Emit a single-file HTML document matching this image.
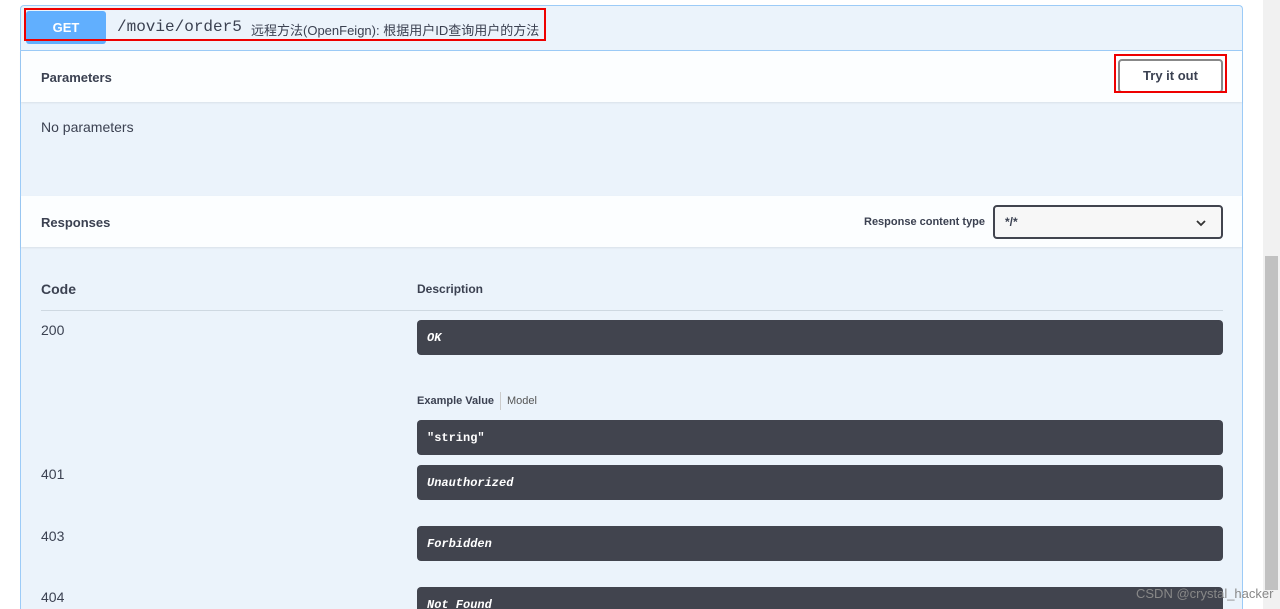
<!DOCTYPE html>
<html style="width:1280px;height:609px;overflow:hidden"><head><meta charset="utf-8"><style>
*{margin:0;padding:0;box-sizing:border-box}
body{width:1280px;height:609px;overflow:hidden;background:#fff;font-family:"Liberation Sans","Noto Sans CJK SC",sans-serif;color:#3b4151;position:relative}
.a{position:absolute}
.panel{left:20px;top:5px;width:1223px;height:604px;background:#ebf3fb;border:1px solid #9ccbf7;border-bottom:none;border-radius:4px 4px 0 0}
.bar{left:21px;width:1221px;background:rgba(255,255,255,.85);box-shadow:0 1px 2px rgba(0,0,0,.08)}
.b{font-weight:bold;font-size:13px}
.dark{left:417px;width:806px;height:35px;background:#41444e;border-radius:4px;color:#fff;font-family:"Liberation Mono",monospace;font-weight:bold;font-size:12px;padding:11px 10px;overflow:hidden}
.i{font-style:italic}
.code{left:41px;font-size:14px;color:#3b4151}
</style></head><body>
<div class="a panel"></div>
<div class="a" style="left:1263px;top:0;width:17px;height:609px;background:#f1f1f1"></div>
<div class="a" style="left:1265px;top:256px;width:13px;height:334px;background:#c1c1c1"></div>
<div class="a" style="left:21px;top:50px;width:1221px;height:1px;background:#9ccbf7"></div>
<div class="a" style="left:26px;top:11px;width:80px;height:33px;background:#61affe;border-radius:3px;color:#fff;font-weight:bold;font-size:13px;text-align:center;line-height:33px">GET</div>
<div class="a" style="left:117px;top:18px;font-family:'Liberation Mono',monospace;font-size:16px;color:#3b4151">/movie/order5</div>
<div class="a" style="left:251px;top:20px;font-size:13px;color:#3b4151">远程方法(OpenFeign): 根据用户ID查询用户的方法</div>
<div class="a" style="left:24px;top:8px;width:522px;height:33px;border:2px solid #e00"></div>
<div class="a bar" style="top:51px;height:51px"></div>
<div class="a b" style="left:41px;top:70px">Parameters</div>
<div class="a" style="left:1118px;top:59px;width:105px;height:34px;border:2px solid #888;border-radius:4px;background:#fff;font-weight:bold;font-size:13px;text-align:center;line-height:30px">Try it out</div>
<div class="a" style="left:1114px;top:54px;width:113px;height:39px;border:2px solid #e00"></div>
<div class="a" style="left:41px;top:119px;font-size:14px">No parameters</div>
<div class="a bar" style="top:196px;height:51px"></div>
<div class="a b" style="left:41px;top:215px">Responses</div>
<div class="a" style="left:864px;top:216px;font-size:11px;font-weight:bold">Response content type</div>
<div class="a" style="left:993px;top:205px;width:230px;height:34px;border:2px solid #41444e;border-radius:4px;background:#f7f7f7;font-size:12px;font-weight:bold;padding:8px 10px">*/*<svg style="position:absolute;right:15px;top:12px" width="10" height="8"><path d="M1 2l4 4 4-4" stroke="#333" stroke-width="1.8" fill="none"/></svg></div>
<div class="a" style="left:41px;top:281px;font-size:14px;font-weight:bold">Code</div>
<div class="a" style="left:417px;top:282px;font-size:12px;font-weight:bold">Description</div>
<div class="a" style="left:41px;top:310px;width:1182px;height:1px;background:#ced8e1"></div>
<div class="a code" style="top:322px">200</div>
<div class="a dark i" style="top:320px">OK</div>
<div class="a" style="left:417px;top:395px;font-size:11px;font-weight:bold">Example Value</div>
<div class="a" style="left:500px;top:392px;width:1px;height:18px;background:#ccc"></div>
<div class="a" style="left:507px;top:395px;font-size:11px;color:#555">Model</div>
<div class="a dark" style="top:420px">"string"</div>
<div class="a code" style="top:466px">401</div>
<div class="a dark i" style="top:465px">Unauthorized</div>
<div class="a code" style="top:528px">403</div>
<div class="a dark i" style="top:526px">Forbidden</div>
<div class="a code" style="top:589px">404</div>
<div class="a dark i" style="top:587px;height:22px;border-radius:4px 4px 0 0">Not Found</div>
<div class="a" style="left:1136px;top:586px;font-size:13px;color:#888">CSDN @crystal_hacker</div>
</body></html>
